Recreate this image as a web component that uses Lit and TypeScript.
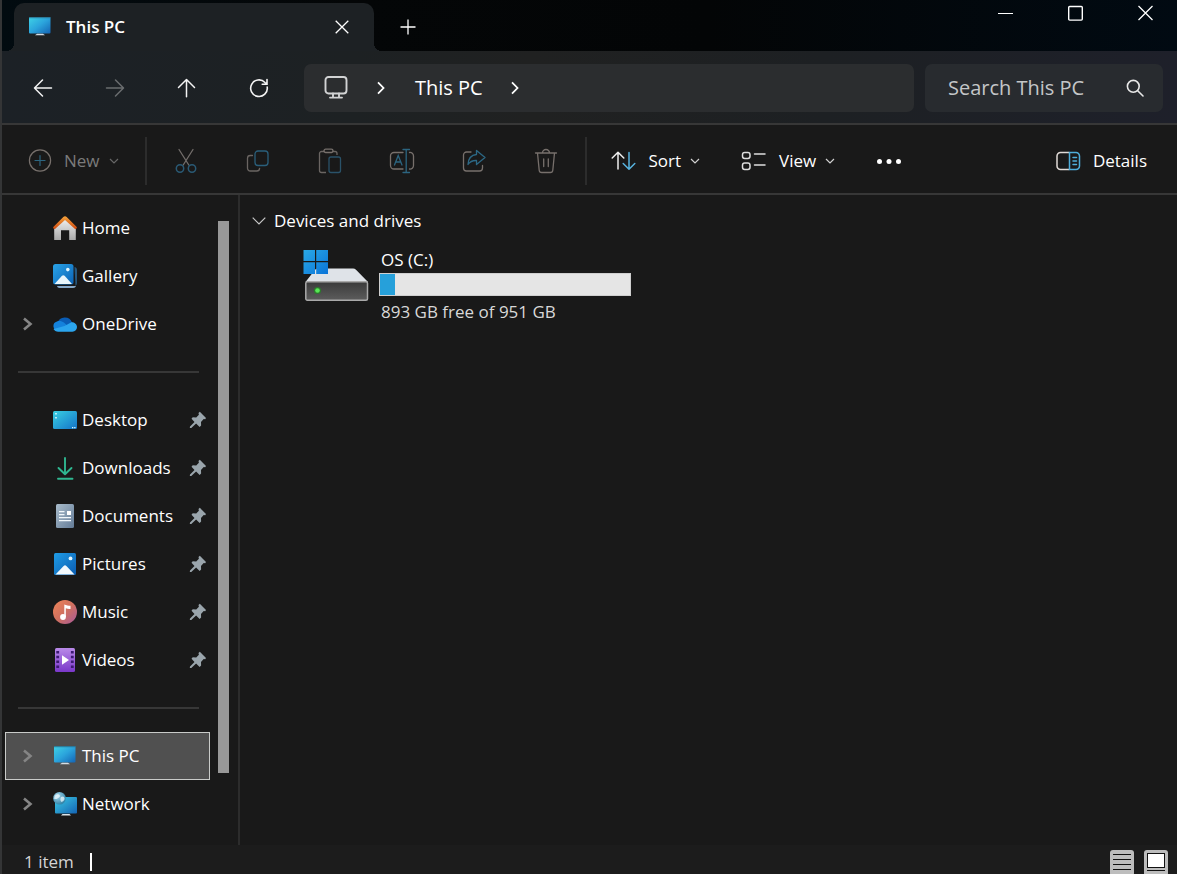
import { LitElement, html, css, nothing, type TemplateResult } from "lit";
import { customElement, property, state } from "lit/decorators.js";
import { classMap } from "lit/directives/class-map.js";
import { styleMap } from "lit/directives/style-map.js";

const icons: Record<string, TemplateResult> = {
  pc: html`<svg width="24" height="24" viewBox="0 0 24 24" aria-hidden="true">
    <defs><linearGradient id="pc" x1="0" y1="0" x2="1" y2="1"><stop offset="0" stop-color="#3fd3e6"/><stop offset=".5" stop-color="#2ba4dc"/><stop offset="1" stop-color="#1464b4"/></linearGradient></defs>
    <rect x="1" y="2" width="21.5" height="16.5" rx="1" fill="url(#pc)"/>
    <path d="M1 2.700h21.5" stroke="#2c6f8d" stroke-width="1"/>
    <path d="M7 20.200 9 18.800h6l2 1.400z" fill="#d5dde3"/></svg>`,
  home: html`<svg width="24" height="24" viewBox="0 0 24 24" aria-hidden="true">
    <defs><linearGradient id="hw" x1="0" y1="0" x2="0" y2="1"><stop offset="0" stop-color="#efefef"/><stop offset="1" stop-color="#a9a9a9"/></linearGradient>
    <linearGradient id="hr" x1="0" y1="0" x2="0" y2="1"><stop offset="0" stop-color="#f5a33b"/><stop offset="1" stop-color="#cf4b12"/></linearGradient></defs>
    <path d="M1.2 12 12 3l10.800 9v12h-6.600V14.300H8V24H1.200z" fill="url(#hw)"/>
    <path d="M12 .2c.7 0 1.2.3 1.7.8L23.7 11c.6.8-.8 2.6-1.7 1.9L12 4 2 12.900C1.100 13.600-.3 11.800.3 11L10.300 1c.5-.5 1-.8 1.700-.8z" fill="url(#hr)"/></svg>`,
  gallery: html`<svg width="24" height="24" viewBox="0 0 24 24" aria-hidden="true">
    <defs><linearGradient id="gl" x1="0" y1="0" x2="1" y2="1"><stop offset="0" stop-color="#2aa4e8"/><stop offset="1" stop-color="#0b62b5"/></linearGradient></defs>
    <path d="M21.500 3c1.500.3 2.500 1.200 2.500 2.600V19a4 4 0 0 1-1.500 3z" fill="#26587f"/>
    <path d="M4 22h19c-.4 1.300-1.400 2-2.800 2H6.500C5.200 24 4.300 23.200 4 22z" fill="#86a8c8"/>
    <rect width="20.500" height="20.500" rx="2.500" fill="url(#gl)"/>
    <path d="M1.500 20 9 11.800q1.300-1.300 2.600 0L19 20z" fill="#e8f5fb"/><circle cx="14.800" cy="5.600" r="1.800" fill="#dff5ff"/></svg>`,
  onedrive: html`<svg width="24" height="24" viewBox="0 0 24 24" aria-hidden="true">
    <path d="M4.500 11A7.600 7.600 0 0 1 19 10.500L19 16H3z" fill="#0a5db5"/>
    <path d="M4 9.400c2.600-.7 5-.1 7.200 1.300L20 19H5.200A4.900 4.900 0 0 1 4 9.400z" fill="#1482dc"/>
    <path d="M11.500 14 18 10.400c3.300-.3 6 1.900 6 4.700 0 2.600-1.800 4.600-4.600 4.600H5.200c-2.100 0-3.900-1.100-4.700-2.700z" fill="#2ba5ee"/></svg>`,
  desktop: html`<svg width="24" height="24" viewBox="0 0 24 24" aria-hidden="true">
    <defs><linearGradient id="dk" x1="0" y1="0" x2="1" y2="1"><stop offset="0" stop-color="#39d0e2"/><stop offset="1" stop-color="#1473c8"/></linearGradient></defs>
    <rect y="3" width="24" height="18" rx="1.500" fill="url(#dk)"/>
    <path d="M2.200 5h1.600v1.600H2.200zM2.200 9h1.600v1.600H2.200zM19 19h1.300v1.300H19zM21.200 19h1.300v1.300h-1.300z" fill="#d8fbff"/></svg>`,
  downloads: html`<svg width="24" height="24" viewBox="0 0 24 24" fill="none" stroke="#2fb690" stroke-width="1.900" stroke-linecap="round" stroke-linejoin="round" aria-hidden="true">
    <path d="M12 2v16M5.500 12 12 18.300 18.500 12M5 22.800h14.500"/></svg>`,
  documents: html`<svg width="24" height="24" viewBox="0 0 24 24" aria-hidden="true">
    <defs><linearGradient id="dc" x1="0" y1="0" x2="1" y2="1"><stop offset="0" stop-color="#a9bccb"/><stop offset="1" stop-color="#647c98"/></linearGradient></defs>
    <rect x="3" width="18" height="24" rx="1.500" fill="url(#dc)"/>
    <path d="M6 7.700h5.500M6 10.700h5.500M6 13.600h12M6 16.600h12" stroke="#f2f8fc" stroke-width="1.200"/><path d="M14 7h4v4h-4z" fill="#fff"/></svg>`,
  pictures: html`<svg width="24" height="24" viewBox="0 0 24 24" aria-hidden="true">
    <defs><linearGradient id="pi" x1="0" y1="0" x2="1" y2="1"><stop offset="0" stop-color="#1f9ce6"/><stop offset="1" stop-color="#0b5cb0"/></linearGradient></defs>
    <rect x="1" y="1" width="22" height="22" rx="1.500" fill="url(#pi)"/>
    <path d="M2.500 22.500 10.600 14q1.400-1.300 2.800 0l8.100 8.500z" fill="#f2f9fd"/><circle cx="17.500" cy="6.400" r="1.900" fill="#dff5ff"/></svg>`,
  music: html`<svg width="24" height="24" viewBox="0 0 24 24" aria-hidden="true">
    <defs><linearGradient id="mu" x1="0" y1="0" x2="1" y2="1"><stop offset="0" stop-color="#ee8457"/><stop offset=".5" stop-color="#d0705f"/><stop offset="1" stop-color="#a85a9c"/></linearGradient></defs>
    <circle cx="12" cy="12" r="12" fill="url(#mu)"/>
    <circle cx="10" cy="17" r="2.900" fill="#fff"/><path d="M11.300 17V4.500c2 1 4.300 1.300 6.200 1.300V9c-1.700.2-3.300-.1-4.700-.7V17z" fill="#fff"/></svg>`,
  videos: html`<svg width="24" height="24" viewBox="0 0 24 24" aria-hidden="true">
    <defs><linearGradient id="vi" x1="0" y1="0" x2="0" y2="1"><stop offset="0" stop-color="#b98ae8"/><stop offset="1" stop-color="#7a37c9"/></linearGradient></defs>
    <rect x="2" width="20" height="24" rx="1.500" fill="url(#vi)"/>
    <path d="M3.300 3h2.800v2.500H3.300zm0 4.800h2.800v2.500H3.300zm0 4.800h2.800v2.500H3.300zm0 4.800h2.800v2.500H3.300zM17.900 3h2.800v2.500h-2.800zm0 4.800h2.800v2.500h-2.800zm0 4.800h2.800v2.500h-2.800zm0 4.800h2.800v2.500h-2.800z" fill="#3d1a73"/>
    <path d="M9 7.300 16 12l-7 4.700z" fill="#fff"/></svg>`,
  network: html`<svg width="24" height="24" viewBox="0 0 24 24" aria-hidden="true">
    <defs><linearGradient id="nw" x1="0" y1="0" x2="1" y2="1"><stop offset="0" stop-color="#3ccbe4"/><stop offset="1" stop-color="#1464b4"/></linearGradient>
    <radialGradient id="gb" cx=".35" cy=".3" r=".8"><stop offset="0" stop-color="#a9daee"/><stop offset="1" stop-color="#25799f"/></radialGradient></defs>
    <rect x="2" y="5" width="22" height="16.500" rx="1" fill="url(#nw)"/><path d="M8 23.500 9.500 22h7l1.500 1.500z" fill="#dbe3e8"/>
    <circle cx="6.500" cy="6.300" r="6.300" fill="url(#gb)"/>
    <path d="M2 3.500q3-2 4.500-.5T4.500 6.500Q3 7.500 1 6.500zM8 5q3-1.500 3.500 1T8.500 10Q6.500 8 8 5z" fill="#edfaff" opacity=".75"/></svg>`,
  pin: html`<svg width="18" height="18" viewBox="0 0 18 18" aria-hidden="true">
    <path d="M10.800.8 17 6.900l-.8 1.400-1.500-.2-2.700 2.900.1 3.600-1.500 1.300-3.500-3.500L2.300 16.900l-1.500.2.200-1.500 4.500-4.700L2.500 7.700l1.200-1.400 3.500.2 2.700-2.800L9.500 2z" fill="#9aa5ac"/></svg>`,
  expand: html`<svg width="12" height="16" viewBox="0 0 12 16" fill="none" stroke="currentColor" stroke-width="2.600" aria-hidden="true"><path d="M2 2.500 8.500 8 2 13.500"/></svg>`,
  crumb: html`<svg width="10" height="14" viewBox="0 0 10 14" fill="none" stroke="#fff" stroke-width="1.800" aria-hidden="true"><path d="M2 1.300 7.500 7 2 12.700"/></svg>`,
  caret: html`<svg width="10" height="8" viewBox="0 0 10 8" fill="none" stroke="currentColor" stroke-width="1.200" opacity=".8" aria-hidden="true"><path d="M1 2 5 6 9 2"/></svg>`,
  group: html`<svg width="14" height="10" viewBox="0 0 14 10" fill="none" stroke="#c8c8c8" stroke-width="1.200" aria-hidden="true"><path d="M.7 1.700 7 8l6.300-6.300"/></svg>`,
  back: html`<svg width="20" height="20" viewBox="0 0 20 20" fill="none" stroke="currentColor" stroke-width="1.500" stroke-linecap="round" stroke-linejoin="round" aria-hidden="true"><path d="M18.500 10H1.700M9.500 2 1.500 10l8 8"/></svg>`,
  forward: html`<svg width="20" height="20" viewBox="0 0 20 20" fill="none" stroke="currentColor" stroke-width="1.500" stroke-linecap="round" stroke-linejoin="round" aria-hidden="true"><path d="M1.500 10h16.800M10.500 2l8 8-8 8"/></svg>`,
  up: html`<svg width="20" height="20" viewBox="0 0 20 20" fill="none" stroke="currentColor" stroke-width="1.500" stroke-linecap="round" stroke-linejoin="round" aria-hidden="true"><path d="M9.500 18.800V1.700M1.500 9.500l8-8 8 8"/></svg>`,
  refresh: html`<svg width="20" height="20" viewBox="0 0 20 20" fill="none" stroke="currentColor" stroke-width="1.600" stroke-linecap="round" aria-hidden="true"><path d="M18.200 9A8.300 8.300 0 1 1 16 4.500L17.600 6M18 1.500v4.800h-4.800"/></svg>`,
  monitor: html`<svg width="24" height="24" viewBox="0 0 24 24" fill="none" stroke="#d2d3d4" stroke-width="1.900" stroke-linecap="round" aria-hidden="true"><rect x="1.500" y="1" width="21" height="16.500" rx="3"/><path d="M9 17.500v4M15 17.500v4M6 21.600h12"/></svg>`,
  search: html`<svg width="18" height="18" viewBox="0 0 18 18" fill="none" stroke="#e8e8e8" stroke-width="1.600" stroke-linecap="round" aria-hidden="true"><circle cx="7.300" cy="7.300" r="5.900"/><path d="m11.700 11.700 5.300 5.300"/></svg>`,
  close: html`<svg width="16" height="16" viewBox="0 0 16 16" fill="none" stroke="#fff" stroke-width="1.300" aria-hidden="true"><path d="m.5 1 14 14M14.500 1 .5 15"/></svg>`,
  tabClose: html`<svg width="14" height="14" viewBox="0 0 14 14" fill="none" stroke="#fff" stroke-width="1.300" aria-hidden="true"><path d="m.7.7 12.600 12.600M13.300.7.700 13.300"/></svg>`,
  plus: html`<svg width="16" height="16" viewBox="0 0 16 16" fill="none" stroke="#fff" stroke-width="1.300" aria-hidden="true"><path d="M8 .5v15M.5 8h15"/></svg>`,
  minimise: html`<svg width="16" height="16" viewBox="0 0 16 16" aria-hidden="true"><path d="M0 8h15v1H0z" fill="#fff"/></svg>`,
  maximise: html`<svg width="16" height="16" viewBox="0 0 16 16" fill="none" stroke="#fff" stroke-width="1.400" aria-hidden="true"><rect x=".7" y="1.500" width="13.600" height="13.600" rx="1"/></svg>`,
  create: html`<svg width="24" height="24" viewBox="0 0 24 24" fill="none" stroke-width="1.200" stroke-linecap="round" aria-hidden="true"><circle cx="12" cy="11.500" r="10.600" stroke="#77706c"/><path d="M12 6.500v10M7 11.500h10" stroke="#2c6580"/></svg>`,
  cut: html`<svg width="24" height="26" viewBox="0 0 24 26" fill="none" stroke-width="1.300" stroke-linecap="round" aria-hidden="true"><path d="M5 1.500 14.800 17M19 1.500 9.200 17" stroke="#736e6b"/><circle cx="6" cy="20.500" r="3.700" stroke="#2a5a75" stroke-width="1.500"/><circle cx="18" cy="20.500" r="3.700" stroke="#2a5a75" stroke-width="1.500"/></svg>`,
  copy: html`<svg width="24" height="24" viewBox="0 0 24 24" fill="none" stroke-width="1.300" stroke-linecap="round" aria-hidden="true"><path d="M6.500 6.500H4.300A2.800 2.800 0 0 0 1.500 9.300v9.900A2.800 2.800 0 0 0 4.300 22h6.500a2.800 2.800 0 0 0 2.800-2.600" stroke="#6a6562"/><rect x="9" y="2" width="13" height="14.500" rx="3" stroke="#2a5f7b"/></svg>`,
  paste: html`<svg width="24" height="26" viewBox="0 0 24 26" fill="none" stroke-width="1.300" aria-hidden="true"><path d="M6 3.500H3.500a2 2 0 0 0-2 2v17a2 2 0 0 0 2 2H8M14.500 3.500H17a2 2 0 0 1 2 2V7" stroke="#6a6562"/><rect x="6" y="1.200" width="9" height="3.300" rx="1.650" stroke="#77706c"/><rect x="11" y="9" width="11.500" height="15.500" rx="2" stroke="#2a5269"/></svg>`,
  rename: html`<svg width="26" height="26" viewBox="0 0 26 26" fill="none" stroke-width="1.300" stroke-linecap="round" aria-hidden="true"><path d="M14 4.500H5A3.500 3.500 0 0 0 1.500 8v9.500A3.500 3.500 0 0 0 5 21h9M20.500 4.500A3.500 3.500 0 0 1 24.500 8v9.500a3.500 3.500 0 0 1-4 3.500" stroke="#77706c"/><path d="M5.500 17 9.200 7.500 13 17M7 14h4.500" stroke="#2c6580"/><path d="M17.200 1.500v23M14 1.500h6.500M14 24.500h6.500" stroke="#2c6580"/></svg>`,
  share: html`<svg width="24" height="24" viewBox="0 0 24 24" fill="none" stroke-width="1.300" stroke-linecap="round" stroke-linejoin="round" aria-hidden="true"><path d="M9 3H4.500a3 3 0 0 0-3 3v13a3 3 0 0 0 3 3h13a3 3 0 0 0 3-3v-2.500" stroke="#77706c"/><path d="M14.500 1.500 23 8.500l-8.500 7v-4C10.500 11.300 8 12.500 6 15.500 6.300 9.500 9.500 6 14.500 5.500z" stroke="#2c6885"/></svg>`,
  trash: html`<svg width="24" height="26" viewBox="0 0 24 26" fill="none" stroke="#77706c" stroke-width="1.300" stroke-linecap="round" aria-hidden="true"><path d="M1.500 5h21M8.500 5a3.500 3.500 0 0 1 7 0M3.500 5l1.700 17.200a2.500 2.500 0 0 0 2.500 2.300h8.600a2.500 2.500 0 0 0 2.500-2.300L20.500 5M9.700 11v7.500M14.300 11v7.500"/></svg>`,
  sort: html`<svg width="26" height="22" viewBox="0 0 26 22" fill="none" stroke-width="1.500" stroke-linecap="round" stroke-linejoin="round" aria-hidden="true"><path d="M7 19V2.500M1.200 8 7 2.200 12.800 8" stroke="#eee"/><path d="M18 2.500V19M12.200 13.500l5.800 5.800 5.800-5.800" stroke="#58b4e0"/></svg>`,
  view: html`<svg width="26" height="20" viewBox="0 0 26 20" fill="none" stroke="#dedede" stroke-width="1.500" stroke-linecap="round" aria-hidden="true"><rect x="1.500" y="1.500" width="7.500" height="6" rx="2.200"/><rect x="1.500" y="12" width="7.500" height="6.500" rx="2.200"/><path d="M13.500 3H24M13.500 14H24"/></svg>`,
  more: html`<svg width="26" height="6" viewBox="0 0 26 6" fill="#fff" aria-hidden="true"><circle cx="3.500" cy="3.500" r="2.500"/><circle cx="13" cy="3.500" r="2.500"/><circle cx="22.500" cy="3.500" r="2.500"/></svg>`,
  details: html`<svg width="26" height="20" viewBox="0 0 26 20" fill="none" stroke-width="1.500" stroke-linecap="round" aria-hidden="true"><path d="M14 1.500H5.500A3.500 3.500 0 0 0 2 5v10a3.500 3.500 0 0 0 3.500 3.500H14" stroke="#e0dad6"/><path d="M14.500 1.500H21A3.500 3.500 0 0 1 24.500 5v10a3.500 3.500 0 0 1-3.500 3.500h-6.500zM18 6.500h3.500M18 10h3.500M18 13.500h3.500" stroke="#4fadd9"/></svg>`,
  drive: html`<svg width="66" height="54" viewBox="0 0 66 54" aria-hidden="true">
    <defs><linearGradient id="wn" x1="0" y1="0" x2="1" y2="1"><stop offset="0" stop-color="#2aa9e6"/><stop offset="1" stop-color="#0a74d8"/></linearGradient>
    <linearGradient id="db" x1="0" y1="0" x2="0" y2="1"><stop offset="0" stop-color="#3a3a3a"/><stop offset="1" stop-color="#5c5c5c"/></linearGradient></defs>
    <path d="M15 19.500h35q1.800 0 3 1.300L65 33H2.500L12 20.800q1.200-1.300 3-1.300z" fill="#dfe3e8"/>
    <rect x="2.800" y="32.800" width="61.700" height="18.400" rx="1.500" fill="url(#db)" stroke="#a9a9a9" stroke-width="1.500"/>
    <circle cx="14.500" cy="41.500" r="3.600" fill="#2c7a2c"/><circle cx="14.500" cy="41.500" r="2.300" fill="#58e856"/>
    <path d="M.5 1H12v11H.5zM13.200 1H25v11H13.200zM.5 13.200H12V25H.5zM13.200 13.200H25V25H13.200z" fill="url(#wn)"/></svg>`,
  listMode: html`<svg width="24" height="24" viewBox="0 0 24 24" aria-hidden="true"><rect width="24" height="26" rx="3" fill="#bdbdbd"/><path d="M3 4.500h18M3 9.500h18M3 14.500h18M3 19.500h18" stroke="#111" stroke-width="1"/></svg>`,
  largeMode: html`<svg width="24" height="24" viewBox="0 0 24 24" aria-hidden="true"><rect width="24" height="26" rx="3" fill="#bdbdbd"/><rect x="3.500" y="3.500" width="17" height="14" fill="#fff" stroke="#111"/><path d="M3 20.500h18" stroke="#111"/></svg>`,
};

interface Place {
  label: string;
  icon: string;
  pinned?: boolean;
  expandable?: boolean;
}

const groups: Place[][] = [
  [
    { label: "Home", icon: "home" },
    { label: "Gallery", icon: "gallery" },
    { label: "OneDrive", icon: "onedrive", expandable: true },
  ],
  [
    { label: "Desktop", icon: "desktop", pinned: true },
    { label: "Downloads", icon: "downloads", pinned: true },
    { label: "Documents", icon: "documents", pinned: true },
    { label: "Pictures", icon: "pictures", pinned: true },
    { label: "Music", icon: "music", pinned: true },
    { label: "Videos", icon: "videos", pinned: true },
  ],
  [
    { label: "This PC", icon: "pc", expandable: true },
    { label: "Network", icon: "network", expandable: true },
  ],
];

const base = css`
  *, *::before, *::after { box-sizing: border-box; }
  svg { display: block; flex: none; }
  button {
    display: flex; align-items: center; justify-content: center;
    padding: 0; border: 0; background: none; color: inherit; font: inherit;
  }
  a { color: inherit; text-decoration: none; }
`;

@customElement("explorer-titlebar")
class ExplorerTitlebar extends LitElement {
  static styles = [base, css`
    :host {
      display: flex; align-items: flex-end; height: 51px; padding-left: 12px;
      background: linear-gradient(90deg, #020b10, #040607 30%, #030506 60%, #010a12);
    }
    .tab {
      position: relative; display: flex; align-items: center; width: 360px; height: 48px;
      padding: 0 25px 0 14px; border-radius: 10px 10px 0 0; background: #1d2124;
      font-weight: 600;
    }
    .tab::before, .tab::after {
      content: ""; position: absolute; bottom: 0; width: 8px; height: 8px;
    }
    .tab::before { right: 100%; background: radial-gradient(circle at 0 0, transparent 8px, #1d2124 8px); }
    .tab::after { left: 100%; background: radial-gradient(circle at 100% 0, transparent 8px, #1d2124 8px); }
    .name { flex: 1; padding-left: 14px; }
    .add { width: 40px; height: 48px; margin-left: 14px; }
    .controls { display: flex; gap: 8px; align-self: flex-start; margin-left: auto; }
    .control { width: 62px; height: 26px; }
  `];

  render() {
    return html`
      <div class="tab">
        ${icons.pc}<span class="name">This PC</span>
        <button aria-label="Close tab">${icons.tabClose}</button>
      </div>
      <button class="add" aria-label="New tab">${icons.plus}</button>
      <div class="controls">
        <button class="control" aria-label="Minimise">${icons.minimise}</button>
        <button class="control" aria-label="Maximise">${icons.maximise}</button>
        <button class="control" aria-label="Close">${icons.close}</button>
      </div>`;
  }
}

@customElement("explorer-address")
class ExplorerAddress extends LitElement {
  static styles = [base, css`
    :host {
      display: flex; align-items: center; padding: 13px 14px 11px 21px;
      border-bottom: 2px solid #373737; font-size: 20px;
      background: linear-gradient(90deg, #1c2126, #1d2123 30%, #202121 45%, #1d2023 70%, #1e202a);
    }
    .history { display: flex; gap: 32px; padding-right: 25px; }
    .step { width: 40px; height: 48px; color: #f4f4f4; }
    .step:disabled { color: #6a6d6f; }
    .path {
      display: flex; flex: 1; align-items: center; min-width: 0; height: 48px;
      padding-left: 20px; border-radius: 7px; background: #2b2d2f;
    }
    .crumb { padding: 0 27px 0 29px; }
    .root { padding-right: 28px; }
    .search {
      display: flex; align-items: center; width: 238px; height: 48px; margin-left: 11px;
      padding: 0 19px 0 23px; border-radius: 7px; background: #282b2f;
    }
    input {
      flex: 1; min-width: 0; padding: 0; border: 0; outline: 0;
      background: none; color: #fff; font: inherit;
    }
    input::placeholder { color: #c4c6c8; opacity: 1; }
  `];

  render() {
    return html`
      <div class="history">
        <button class="step" aria-label="Back">${icons.back}</button>
        <button class="step" aria-label="Forward" disabled>${icons.forward}</button>
        <button class="step" aria-label="Up">${icons.up}</button>
        <button class="step" aria-label="Refresh">${icons.refresh}</button>
      </div>
      <nav class="path" aria-label="Address">
        <button class="root" aria-label="Root">${icons.monitor}</button>${icons.crumb}
        <button class="crumb">This PC</button>${icons.crumb}
      </nav>
      <label class="search">
        <input type="text" placeholder="Search This PC" aria-label="Search This PC">
        ${icons.search}
      </label>`;
  }
}

@customElement("explorer-toolbar")
class ExplorerToolbar extends LitElement {
  static styles = [base, css`
    :host {
      display: flex; align-items: center; padding: 12px 30px 8px 26px;
      border-bottom: 2px solid #373737; background: #191919; color: #fff;
    }
    .action { gap: 12px; height: 48px; }
    .action:disabled { color: #7b7b7b; }
    .caret { margin-left: 9px; }
    .label { display: flex; align-items: center; }
    .rule { width: 2px; height: 48px; background: #2c2c2c; }
    .new { padding-right: 26px; }
    .tools { display: flex; gap: 32px; padding: 0 19px; }
    .tool { width: 40px; height: 48px; }
    .menus { display: flex; gap: 41px; padding-left: 24px; }
    .end { margin-left: auto; }
  `];

  private menu(label: string, icon: TemplateResult) {
    return html`<button class="action">${icon}<span class="label">${label}<span class="caret">${icons.caret}</span></span></button>`;
  }

  render() {
    const tools: [string, string][] = [
      ["Cut", "cut"], ["Copy", "copy"], ["Paste", "paste"],
      ["Rename", "rename"], ["Share", "share"], ["Delete", "trash"],
    ];
    return html`
      <button class="action new" disabled>${icons.create}<span class="label">New<span class="caret">${icons.caret}</span></span></button>
      <span class="rule"></span>
      <div class="tools">
        ${tools.map(([name, icon]) => html`<button class="tool" aria-label=${name} disabled>${icons[icon]}</button>`)}
      </div>
      <span class="rule"></span>
      <div class="menus">
        ${this.menu("Sort", icons.sort)}${this.menu("View", icons.view)}
        <button class="action" aria-label="See more">${icons.more}</button>
      </div>
      <button class="action end">${icons.details}<span>Details</span></button>`;
  }
}

@customElement("explorer-sidebar")
class ExplorerSidebar extends LitElement {
  @state() private current = "This PC";

  static styles = [base, css`
    :host { display: flex; width: 238px; padding-left: 3px; border-right: 2px solid #2c2c2c; background: #191919; }
    nav { width: 205px; padding: 9px 0 16px; }
    ul { margin: 0; padding: 0; list-style: none; }
    li { display: flex; align-items: center; height: 48px; border: 1px solid transparent; }
    li.current { border-color: #c9cbc9; background: #505050; }
    .toggle { width: 47px; height: 46px; padding-right: 3px; color: #858585; }
    .place { display: flex; flex: 1; align-items: center; height: 46px; padding-right: 2px; }
    .place.bare { padding-left: 47px; }
    .name { flex: 1; padding-left: 5px; }
    hr { height: 2px; margin: 23px 11px 23px 13px; border: 0; background: #373737; }
    .track { display: flex; flex-direction: column; width: 11px; margin-left: 8px; padding-top: 26px; }
    .thumb { flex: 552; background: #989898; }
    .rest { flex: 72; }
  `];

  private place(item: Place) {
    return html`
      <li class=${classMap({ current: item.label === this.current })}>
        ${item.expandable ? html`<button class="toggle" aria-label="Expand ${item.label}">${icons.expand}</button>` : nothing}
        <a class=${classMap({ place: true, bare: !item.expandable })} href="#" @click=${(e: Event) => { e.preventDefault(); this.current = item.label; }}>
          ${icons[item.icon]}<span class="name">${item.label}</span>${item.pinned ? icons.pin : nothing}
        </a>
      </li>`;
  }

  render() {
    return html`
      <nav aria-label="Places">
        ${groups.map((group, i) => html`${i ? html`<hr>` : nothing}<ul>${group.map((p) => this.place(p))}</ul>`)}
      </nav>
      <div class="track"><div class="thumb"></div><div class="rest"></div></div>`;
  }
}

@customElement("drive-tile")
class DriveTile extends LitElement {
  @property() name = "";
  @property({ type: Number }) total = 1;
  @property({ type: Number }) free = 0;

  static styles = [base, css`
    :host { display: flex; gap: 10px; }
    .icon { padding-top: 2px; }
    .text { padding-left: 2px; line-height: 26px; }
    .bar { width: 252px; height: 23px; border: 1px solid #cfcfcf; background: #e5e5e5; }
    .used { height: 100%; background: #26a0da; }
    .space { padding-top: 3px; color: #d8d8d8; }
  `];

  render() {
    const used = ((this.total - this.free) / this.total) * 100;
    return html`
      <div class="icon">${icons.drive}</div>
      <div>
        <div class="text">${this.name}</div>
        <div class="bar" role="meter" aria-label="Used space" aria-valuemin="0" aria-valuemax=${this.total} aria-valuenow=${this.total - this.free}>
          <div class="used" style=${styleMap({ width: `${used}%` })}></div>
        </div>
        <div class="text space">${this.free} GB free of ${this.total} GB</div>
      </div>`;
  }
}

@customElement("app-root")
class AppRoot extends LitElement {
  static styles = [base, css`
    :host {
      display: flex; flex-direction: column; box-sizing: border-box; min-height: 100vh;
      border-left: 2px solid #343536; background: #191919; color: #fff;
      font: 17px/24px "Open Sans", "Noto Sans", sans-serif;
    }
    .body { display: flex; flex: 1; }
    main { flex: 1; padding: 14px 12px; }
    .heading { gap: 8px; }
    h2 { margin: 0; font: inherit; }
    drive-tile { padding: 14px 0 0 51px; }
    footer { display: flex; align-items: center; gap: 10px; height: 29px; padding: 5px 9px 0 22px; background: #1c1c1c; color: #d4d4d4; }
    .mark { width: 2px; height: 18px; margin-left: 6px; background: #fff; }
    .modes { display: flex; gap: 10px; margin-left: auto; }
  `];

  render() {
    return html`
      <explorer-titlebar></explorer-titlebar>
      <explorer-address></explorer-address>
      <explorer-toolbar></explorer-toolbar>
      <div class="body">
        <explorer-sidebar></explorer-sidebar>
        <main>
          <h2><button class="heading" aria-expanded="true">${icons.group}<span>Devices and drives</span></button></h2>
          <drive-tile name="OS (C:)" total="951" free="893"></drive-tile>
        </main>
      </div>
      <footer>
        <span>1 item</span><span class="mark"></span>
        <div class="modes">
          <button aria-label="Details view">${icons.listMode}</button>
          <button aria-label="Large icons view">${icons.largeMode}</button>
        </div>
      </footer>`;
  }
}
